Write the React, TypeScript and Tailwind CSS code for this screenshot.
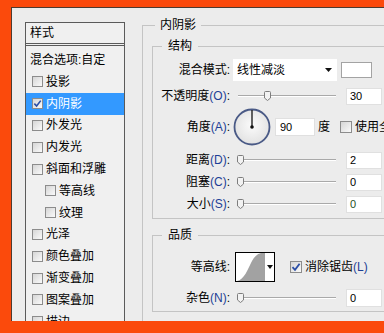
import type { ReactNode } from "react";

const listItems = [
  { label: "投影" },
  { label: "内阴影", checked: true, selected: true },
  { label: "外发光" },
  { label: "内发光" },
  { label: "斜面和浮雕" },
  { label: "等高线", indent: true },
  { label: "纹理", indent: true },
  { label: "光泽" },
  { label: "颜色叠加" },
  { label: "渐变叠加" },
  { label: "图案叠加" },
  { label: "描边" },
];

function CheckBox({ checked, size = 11 }: { checked?: boolean; size?: number }) {
  return (
    <div
      className="shrink-0 border border-[#8c8c8c] bg-gradient-to-br from-[#d6d6d6] to-[#fafafa] flex items-center justify-center"
      style={{ width: size, height: size }}
    >
      {checked && (
        <svg width={size - 2} height={size - 2} viewBox="0 0 10 10">
          <path d="M1.5 5.2 L4 7.8 L8.6 1.8" fill="none" stroke="#2b4ea6" strokeWidth="1.8" />
        </svg>
      )}
    </div>
  );
}

function Key({ k }: { k: string }) {
  return <span className="text-[#1d3f96]">({k})</span>;
}

function Label({ children }: { children: ReactNode }) {
  return <div className="w-[77px] shrink-0 text-right whitespace-nowrap">{children}</div>;
}

function Slider({ width, knob, offset }: { width: number; knob: number; offset: string }) {
  return (
    <div className={`relative h-[12px] shrink-0 ${offset}`} style={{ width }}>
      <div className="absolute left-0 right-0 top-[5px] h-[1px] bg-[#a9a9a9]" />
      <div className="absolute left-0 right-0 top-[6px] h-[1px] bg-white" />
      <svg className="absolute top-[1px]" style={{ left: knob }} width="7" height="10" viewBox="0 0 7 10">
        <path d="M0.5 1.5 Q0.5 0.5 1.5 0.5 L5.5 0.5 Q6.5 0.5 6.5 1.5 L6.5 7 L3.5 9.5 L0.5 7 Z" fill="#f2f2f2" stroke="#7d7d7d" />
      </svg>
    </div>
  );
}

function NumBox({ value, className = "" }: { value: string; className?: string }) {
  return (
    <div className={`ml-[10px] w-[36px] h-[17px] shrink-0 bg-white border border-[#e0e0e0] pl-[3px] flex items-center text-[11px] ${className}`}>
      {value}
    </div>
  );
}

function StyleList() {
  return (
    <div className="w-[100px] h-[400px] shrink-0 mt-[14px] border border-[#5a5a5a] bg-[#f0f0f0]">
      <div className="h-[23px] flex items-center pl-[4px] border-b-[3px] border-double border-[#5a5a5a]">
        样式
      </div>
      <div className="h-[25px] pt-[3px] flex items-center pl-[4px] whitespace-nowrap">混合选项:自定</div>
      {listItems.map((item) => (
        <div
          key={item.label}
          className={`h-[21.8px] flex items-center gap-[3px] ${item.indent ? "pl-[19px]" : "pl-[6px]"} ${
            item.selected ? "bg-[#3399ff] text-white" : ""
          }`}
        >
          <CheckBox checked={item.checked} />
          <span>{item.label}</span>
        </div>
      ))}
    </div>
  );
}

function Structure() {
  return (
    <fieldset className="ml-[9px] mt-[5px] w-[240px] border border-[#c4c4c4] pb-[3px]">
      <legend className="ml-[9px] px-[6px] leading-[16px]">结构</legend>
      <div className="pt-[4px]">
        <div className="h-[24px] flex items-center">
          <Label>混合模式:</Label>
          <div className="ml-[3px] w-[104px] h-[22px] bg-white flex items-center pl-[4px] pr-[5px] justify-between">
            <span>线性减淡</span>
            <svg width="7" height="4" viewBox="0 0 7 4">
              <path d="M0 0 L7 0 L3.5 4 Z" fill="#111" />
            </svg>
          </div>
          <div className="ml-[4px] w-[31px] h-[16px] bg-white border border-[#a3a3a3]" />
        </div>
        <div className="mt-[2px] h-[24px] flex items-center">
          <Label>
            不透明度<Key k="O" />:
          </Label>
          <Slider width={98} knob={26} offset="ml-[8px]" />
          <NumBox value="30" />
        </div>
        <div className="h-[38px] flex items-center">
          <Label>
            角度<Key k="A" />:
          </Label>
          <svg className="ml-[3px] shrink-0" width="38" height="38" viewBox="0 0 38 38">
            <defs>
              <radialGradient id="dial" cx="50%" cy="45%" r="55%">
                <stop offset="0%" stopColor="#fbfbfb" />
                <stop offset="100%" stopColor="#e2e2e2" />
              </radialGradient>
            </defs>
            <circle cx="19" cy="19" r="17.5" fill="url(#dial)" stroke="#4a5a86" strokeWidth="1.8" />
            <line x1="19" y1="19" x2="19" y2="2" stroke="#111" strokeWidth="1.3" />
            <circle cx="19" cy="19" r="1.8" fill="#111" />
          </svg>
          <div className="ml-[4px] w-[40px] h-[18px] shrink-0 bg-white border border-[#e0e0e0] pl-[4px] flex items-center text-[11px]">
            90
          </div>
          <span className="ml-[3px]">度</span>
          <div className="ml-[10px]">
            <CheckBox size={12} />
          </div>
          <span className="ml-[3px] whitespace-nowrap">使用全局光</span>
        </div>
        <div className="mt-[3px] h-[22px] flex items-center">
          <Label>
            距离<Key k="D" />:
          </Label>
          <Slider width={99} knob={0} offset="ml-[7px]" />
          <NumBox value="2" />
        </div>
        <div className="h-[22px] flex items-center">
          <Label>
            阻塞<Key k="C" />:
          </Label>
          <Slider width={99} knob={0} offset="ml-[7px]" />
          <NumBox value="0" />
        </div>
        <div className="h-[22px] flex items-center">
          <Label>
            大小<Key k="S" />:
          </Label>
          <Slider width={99} knob={0} offset="ml-[7px]" />
          <NumBox value="0" className="text-[#1f4f1f]" />
        </div>
      </div>
    </fieldset>
  );
}

function Quality() {
  return (
    <fieldset className="ml-[9px] mt-[8px] w-[240px] border border-[#c4c4c4] pb-[3px]">
      <legend className="ml-[9px] px-[6px] leading-[16px]">品质</legend>
      <div className="mt-[9px] h-[30px] flex items-center">
        <Label>等高线:</Label>
        <div className="ml-[5px] w-[40px] h-[30px] shrink-0 border border-black bg-white flex items-center">
          <svg width="29" height="28" viewBox="0 0 29 28">
            <path d="M1 28 C8 27 12 16 16 8 C18 4 21 1 25 0 L29 0 L29 28 Z" fill="#a2a2a2" />
          </svg>
          <svg className="ml-[2px]" width="6" height="4" viewBox="0 0 6 4">
            <path d="M0 0 L6 0 L3 4 Z" fill="#111" />
          </svg>
        </div>
        <div className="ml-[15px]">
          <CheckBox checked size={12} />
        </div>
        <span className="ml-[3px] whitespace-nowrap">
          消除锯齿<Key k="L" />
        </span>
      </div>
      <div className="mt-[6px] h-[20px] flex items-center">
        <Label>
          杂色<Key k="N" />:
        </Label>
        <Slider width={99} knob={0} offset="ml-[7px]" />
        <NumBox value="0" className="h-[18px]" />
      </div>
    </fieldset>
  );
}

export default function App() {
  return (
    <div
      className="w-[384px] h-[333px] overflow-hidden bg-[#fb4a0c] flex flex-col text-[12px] leading-[16px] text-black"
      style={{ fontFamily: '"Liberation Sans", "Noto Sans CJK SC", sans-serif' }}
    >
      <div className="h-[7px] shrink-0" />
      <div className="flex h-[314px] shrink-0">
        <div className="w-[11px] shrink-0" />
        <div className="flex-1 flex items-start pl-[13px] bg-[#ececec] border-t border-l border-[#4d3b30] overflow-hidden">
          <StyleList />
          <fieldset className="ml-[17px] mt-[9px] w-[260px] shrink-0 border border-[#c4c4c4] pb-[30px]">
            <legend className="ml-[12px] px-[5px] leading-[16px]">内阴影</legend>
            <Structure />
            <Quality />
          </fieldset>
        </div>
      </div>
    </div>
  );
}
